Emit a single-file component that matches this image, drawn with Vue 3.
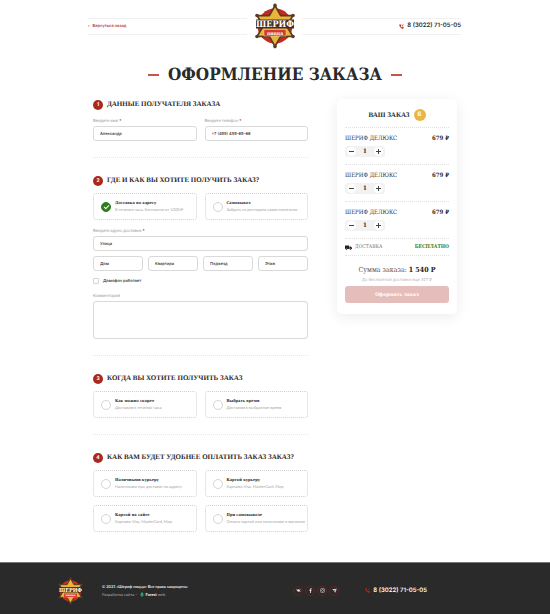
<script setup>
import { ref } from 'vue'

const name = ref('Александр')
const phone = ref('+7 (495) 459-69-66')
const delivery = ref('address')
const time = ref('')
const payment = ref('')
const intercom = ref(false)
const comment = ref('')

const deliveryOptions = [
  { id: 'address', title: 'Доставка по адресу', note: 'В течении часа, бесплатно от 1000 ₽' },
  { id: 'pickup', title: 'Самовывоз', note: 'Забрать из ресторана самостоятельно' },
]
const timeOptions = [
  { id: 'soon', title: 'Как можно скорее', note: 'Доставим в течении часа' },
  { id: 'later', title: 'Выбрать время', note: 'Доставим в выбранное время' },
]
const paymentOptions = [
  { id: 'cash', title: 'Наличными курьеру', note: 'Наличными при доставке по адресу' },
  { id: 'card', title: 'Картой курьеру', note: 'Картами Visa, MasterCard, Мир' },
  { id: 'online', title: 'Картой на сайте', note: 'Картами Visa, MasterCard, Мир' },
  { id: 'onpickup', title: 'При самовывозе', note: 'Оплата картой или наличными в магазине' },
]
const addressParts = ['Дом', 'Квартира', 'Подъезд', 'Этаж']
const items = ref([
  { title: 'ШЕРИФ ДЕЛЮКС', price: '679 ₽', count: 1 },
  { title: 'ШЕРИФ ДЕЛЮКС', price: '679 ₽', count: 1 },
  { title: 'ШЕРИФ ДЕЛЮКС', price: '679 ₽', count: 1 },
])
</script>

<template>
  <div class="page">
    <header class="header">
      <div class="side">
        <a href="#" class="back"><span class="chevron">‹</span>Вернуться назад</a>
      </div>
      <a href="#" class="logo" aria-label="Шериф пицца">
        <svg width="44" height="46" viewBox="0 0 44 46">
          <symbol id="badge" viewBox="0 0 44 46">
            <circle cx="22" cy="23" r="17.5" fill="#c32a20" />
            <path d="M22 2.5 27.6 12.6 40 12.5 33.6 23 40 33.5 27.6 33.4 22 43.5 16.4 33.4 4 33.5 10.4 23 4 12.5 16.4 12.6Z" fill="#e9b43a" stroke="#5b3a20" stroke-width="1.6" stroke-linejoin="round" />
            <g fill="#5b3a20">
              <circle cx="22" cy="2.4" r="1.8" /><circle cx="22" cy="43.6" r="1.8" />
              <circle cx="4" cy="12.5" r="1.8" /><circle cx="40" cy="12.5" r="1.8" />
              <circle cx="4" cy="33.5" r="1.8" /><circle cx="40" cy="33.5" r="1.8" />
            </g>
            <path d="M3 16.5h38v9H3z" fill="#4a2d1e" />
            <rect x="11" y="26.5" width="22" height="6.5" fill="#d23a2c" stroke="#f0d9a0" stroke-width=".5" />
            <text x="22" y="24.2" text-anchor="middle" font-family="DejaVu Serif Condensed, DejaVu Serif, serif" font-weight="700" font-size="9" fill="#fff">ШЕРИФ</text>
            <text x="22" y="31.8" text-anchor="middle" font-family="DejaVu Serif Condensed, DejaVu Serif, serif" font-weight="700" font-size="5" fill="#fff">пицца</text>
          </symbol>
          <use href="#badge" />
        </svg>
      </a>
      <div class="side right">
        <a href="tel:83022710505" class="phone">
          <svg width="5" height="5" viewBox="0 0 10 10"><path d="M1 1.2 3 .4 4.3 3 3.2 4.1Q4 5.9 5.9 6.8L7 5.7 9.6 7 8.8 9Q7.8 10 5.6 8.9 2.2 7.2 1 4.2.3 2.2 1 1.2Z" fill="#b52c22" /><path d="M6 3.8V1M6 3.8h3M6.2 3.6 9.3.6" stroke="#b52c22" stroke-width="1" fill="none" /></svg>
          8 (3022) 71-05-05
        </a>
      </div>
    </header>

    <h1 class="title">ОФОРМЛЕНИЕ ЗАКАЗА</h1>

    <main class="main">
      <form class="form" @submit.prevent>
        <section class="section">
          <h2><span class="num">1</span>ДАННЫЕ ПОЛУЧАТЕЛЯ ЗАКАЗА</h2>
          <div class="two contacts">
            <div class="field">
              <label for="name">Введите имя <b>*</b></label>
              <input id="name" v-model="name" type="text" class="box" />
            </div>
            <div class="field">
              <label for="phone">Введите телефон <b>*</b></label>
              <input id="phone" v-model="phone" type="tel" class="box" />
            </div>
          </div>
        </section>

        <section class="section">
          <h2><span class="num">2</span>ГДЕ И КАК ВЫ ХОТИТЕ ПОЛУЧИТЬ ЗАКАЗ?</h2>
          <div class="two">
            <label v-for="o in deliveryOptions" :key="o.id" class="option">
              <input v-model="delivery" type="radio" name="delivery" :value="o.id" />
              <span class="text"><strong>{{ o.title }}</strong><small>{{ o.note }}</small></span>
            </label>
          </div>
          <div class="field street">
            <label for="street">Введите адрес доставки <b>*</b></label>
            <input id="street" type="text" class="box" placeholder="Улица" />
          </div>
          <div class="four">
            <input v-for="p in addressParts" :key="p" type="text" class="box" :placeholder="p" :aria-label="p" />
          </div>
          <label class="check"><input v-model="intercom" type="checkbox" />Домофон работает</label>
          <div class="field comment">
            <label for="comment">Комментарий</label>
            <textarea id="comment" v-model="comment" class="box area"></textarea>
          </div>
        </section>

        <section class="section">
          <h2><span class="num">3</span>КОГДА ВЫ ХОТИТЕ ПОЛУЧИТЬ ЗАКАЗ</h2>
          <div class="two">
            <label v-for="o in timeOptions" :key="o.id" class="option">
              <input v-model="time" type="radio" name="time" :value="o.id" />
              <span class="text"><strong>{{ o.title }}</strong><small>{{ o.note }}</small></span>
            </label>
          </div>
        </section>

        <section class="section">
          <h2><span class="num">4</span>КАК ВАМ БУДЕТ УДОБНЕЕ ОПЛАТИТЬ ЗАКАЗ ЗАКАЗ?</h2>
          <div class="two">
            <label v-for="o in paymentOptions" :key="o.id" class="option">
              <input v-model="payment" type="radio" name="payment" :value="o.id" />
              <span class="text"><strong>{{ o.title }}</strong><small>{{ o.note }}</small></span>
            </label>
          </div>
        </section>
      </form>

      <aside class="cart">
        <h2 class="cart-title">ВАШ ЗАКАЗ <span>6</span></h2>
        <div v-for="(item, i) in items" :key="i" class="item">
          <div class="row"><span>{{ item.title }}</span><strong>{{ item.price }}</strong></div>
          <div class="stepper">
            <button type="button" aria-label="Убавить" @click="item.count > 1 && item.count--"><svg width="5" height="5" viewBox="0 0 5 5"><path d="M0 2.5h5" /></svg></button>
            <span>{{ item.count }}</span>
            <button type="button" aria-label="Добавить" @click="item.count++"><svg width="5" height="5" viewBox="0 0 5 5"><path d="M0 2.5h5M2.5 0v5" /></svg></button>
          </div>
        </div>
        <div class="shipping">
          <svg width="7" height="5" viewBox="0 0 14 10"><path d="M0 1h8v7H0zM8.6 3h3L14 5.5V8H8.6z" fill="#222" /><circle cx="3" cy="8.3" r="1.5" fill="#222" stroke="#fff" stroke-width=".5" /><circle cx="11" cy="8.3" r="1.5" fill="#222" stroke="#fff" stroke-width=".5" /></svg>
          <span>ДОСТАВКА</span>
          <strong>БЕСПЛАТНО</strong>
        </div>
        <p class="sum">Сумма заказа: <strong>1 540 Р</strong></p>
        <p class="left">До бесплатной доставки еще 327 ₽</p>
        <button type="button" class="submit">Оформить заказ</button>
      </aside>
    </main>

    <footer class="footer">
      <a href="#" class="foot-logo" aria-label="Шериф пицца"><svg width="27" height="28" viewBox="0 0 44 46"><use href="#badge" /></svg></a>
      <div class="legal">
        <p class="copy">© 2021 «Шериф пицца» Все права защищены</p>
        <p class="dev">Разработка сайта – <svg width="4" height="5" viewBox="0 0 8 10"><path d="M4 0 7 3.5H6L8 7H5v3H3V7H0l2-3.5H1z" fill="#2aa37c" /></svg> <a href="#"><b>Forest</b> web</a></p>
      </div>
      <nav class="social">
        <a href="#" aria-label="ВКонтакте"><svg viewBox="0 0 10 10"><path d="M.5 2.5H2.5L4 5V2.5h2V4.5L7.7 2.5h1.8L7.5 5l2 2.5H7.5L6 6v1.5H4.5Q2 7 .5 2.5Z" /></svg></a>
        <a href="#" aria-label="Facebook"><svg viewBox="0 0 10 10"><path d="M4 10V5.5H2.7V3.7H4V2.5Q4 .3 6 .3H7.3V2H6.5Q5.8 2 5.8 2.7v1H7.3L7 5.5H5.8V10Z" /></svg></a>
        <a href="#" aria-label="Instagram"><svg viewBox="0 0 10 10"><g fill="none" stroke="#ddd"><rect x="1" y="1" width="8" height="8" rx="2" /><circle cx="5" cy="5" r="2" /></g><circle cx="7.3" cy="2.7" r=".6" /></svg></a>
        <a href="#" aria-label="Telegram"><svg viewBox="0 0 10 10"><path d="M.5 2.5 9.5 1.5 6.5 9.5 4.5 7 7.5 3 3.3 5.5Z" /></svg></a>
      </nav>
      <a href="tel:83022710505" class="phone">
        <svg width="5" height="5" viewBox="0 0 10 10"><path d="M1 1.2 3 .4 4.3 3 3.2 4.1Q4 5.9 5.9 6.8L7 5.7 9.6 7 8.8 9Q7.8 10 5.6 8.9 2.2 7.2 1 4.2.3 2.2 1 1.2Z" fill="#b52c22" /><path d="M6 1.2Q8.7 1.3 8.8 4M6 2.8Q7.2 2.8 7.2 4" stroke="#b52c22" stroke-width=".8" fill="none" /></svg>
        8 (3022) 71-05-05
      </a>
    </footer>
  </div>
</template>

<style>
body {
  margin: 0;
  background: #fff;
}
</style>

<style scoped>
.page {
  --slab: "DejaVu Serif Condensed", "DejaVu Serif", serif;
  --sans: Inter, Roboto, sans-serif;
  --narrow: Lato, Roboto, sans-serif;
  font-family: var(--sans);
  font-size: 4px;
  line-height: 6px;
  color: #2a2a2a;
  text-rendering: geometricPrecision;
}
.page * {
  box-sizing: border-box;
}
h1, h2, p {
  margin: 0;
}
a {
  color: inherit;
  text-decoration: none;
}
input, textarea, button {
  font: inherit;
  color: inherit;
  margin: 0;
  text-rendering: inherit;
}
.header {
  display: grid;
  grid-template-columns: 1fr 55px 1fr;
  align-items: center;
  padding: 3px 89px 0 88px;
}
.side {
  display: flex;
  align-items: center;
  height: 17px;
  border-top: 1px solid #f1f1f1;
  border-bottom: 1px solid #f1f1f1;
}
.right {
  justify-content: flex-end;
}
.back {
  font-weight: 500;
  color: #a9281e;
}
.chevron {
  margin-right: 3px;
}
.logo {
  display: flex;
  justify-content: center;
}
.phone {
  display: flex;
  align-items: center;
  gap: 3px;
  font-size: 6px;
  font-weight: 600;
}
.title {
  display: flex;
  justify-content: center;
  align-items: center;
  gap: 9px;
  padding: 13px 0 11px;
  font-family: var(--slab);
  font-size: 17px;
  line-height: 26px;
  font-weight: 700;
}
.title::before, .title::after {
  content: "";
  width: 11px;
  height: 2px;
  background: #c8544a;
}
.main {
  display: grid;
  grid-template-columns: minmax(0, 1fr) 120px;
  align-items: start;
  gap: 29px;
  padding: 0 93px 30px;
}
.section + .section {
  margin-top: 16px;
  padding-top: 17px;
  border-top: 1px dotted #e8e8e8;
}
.section h2 {
  display: flex;
  align-items: center;
  gap: 4px;
  font-family: "Liberation Serif", serif;
  font-size: 7px;
  line-height: 11px;
  font-weight: 700;
  white-space: nowrap;
}
.num {
  width: 10px;
  height: 10px;
  border-radius: 50%;
  background: #ab281e;
  color: #fff;
  font-family: var(--sans);
  font-size: 5px;
  line-height: 10px;
  text-align: center;
}
.two {
  display: grid;
  grid-template-columns: repeat(2, minmax(0, 1fr));
  gap: 8px;
  margin-top: 7px;
}
.contacts {
  margin-top: 8px;
}
.four {
  display: grid;
  grid-template-columns: repeat(4, minmax(0, 1fr));
  gap: 5px;
  margin-top: 5px;
}
.field {
  display: flex;
  flex-direction: column;
  gap: 2px;
}
.field label {
  color: #9b9b9b;
}
.field b {
  color: #ab281e;
}
.street {
  margin-top: 8px;
}
.comment {
  margin-top: 9px;
}
.box {
  width: 100%;
  min-width: 0;
  height: 15px;
  padding: 0 6px;
  border: 1px solid #d9d9d9;
  border-radius: 3px;
  background: #fff;
  font-weight: 500;
  outline: 0;
}
.box::placeholder {
  color: #2a2a2a;
}
.area {
  display: block;
  height: 38px;
  padding: 4px 6px;
  resize: none;
}
.option {
  display: flex;
  align-items: center;
  gap: 4px;
  height: 27px;
  padding: 0 7px;
  border: 1px dotted #d0d0d0;
  border-radius: 3px;
}
.option input {
  display: grid;
  place-items: center;
  flex: none;
  appearance: none;
  width: 10px;
  height: 10px;
  border: 1px solid #d5d5d5;
  border-radius: 50%;
}
.option input:checked {
  border-color: #2f7d1f;
  background: #2f7d1f;
}
.option input:checked::after {
  content: "";
  width: 4px;
  height: 2px;
  border-left: 1px solid #fff;
  border-bottom: 1px solid #fff;
  rotate: -45deg;
}
.text {
  display: flex;
  flex-direction: column;
  gap: 1px;
  white-space: nowrap;
}
.text strong {
  font-family: var(--slab);
}
.text small {
  font-family: var(--narrow);
  font-size: 4px;
  color: #a5a5a5;
}
.check {
  display: flex;
  align-items: center;
  gap: 4px;
  margin-top: 6px;
  height: 7px;
  font-weight: 500;
}
.check input {
  appearance: none;
  width: 6px;
  height: 6px;
  border: 1px solid #d5d5d5;
  border-radius: 1px;
}
.check input:checked {
  background: #2f7d1f;
}
.cart {
  padding: 10px 8px 11px;
  border-radius: 5px;
  background: #fff;
  box-shadow: 0 3px 14px rgba(0, 0, 0, 0.08);
  font-family: var(--slab);
}
.cart-title {
  display: flex;
  justify-content: center;
  align-items: center;
  gap: 4px;
  padding-bottom: 6px;
  border-bottom: 1px dotted #e0e0e0;
  font-family: "Liberation Serif", serif;
  font-size: 7px;
  line-height: 12px;
}
.cart-title span {
  width: 12px;
  border-radius: 50%;
  background: #e9b644;
  color: #fff;
  font-family: var(--sans);
  font-size: 6px;
  text-align: center;
}
.item {
  padding: 7px 0;
  border-bottom: 1px dotted #e0e0e0;
}
.row {
  display: flex;
  justify-content: space-between;
  margin-bottom: 4px;
  font-size: 6px;
  line-height: 7px;
}
.stepper {
  display: flex;
  align-items: center;
  justify-content: space-between;
  width: 40px;
  height: 11px;
  padding: 0 2px;
  border-radius: 3px;
  background: #f2f2f2;
  font-size: 6px;
  font-weight: 700;
}
.stepper button {
  display: grid;
  place-items: center;
  width: 9px;
  height: 9px;
  padding: 0;
  border: 0;
  border-radius: 50%;
  background: #fff;
}
.stepper path {
  stroke: #444;
  fill: none;
}
.shipping {
  display: flex;
  align-items: center;
  gap: 3px;
  height: 17px;
  border-bottom: 1px dotted #e0e0e0;
  font-size: 5px;
  color: #777;
}
.shipping strong {
  margin-left: auto;
  color: #2f7d1f;
}
.sum {
  margin-top: 8px;
  font-size: 7px;
  line-height: 11px;
  text-align: center;
  white-space: nowrap;
  color: #555;
}
.sum strong {
  color: #222;
}
.left {
  padding: 1px 0 4px;
  font-family: var(--sans);
  line-height: 5px;
  text-align: center;
  color: #b5b5b5;
}
.submit {
  display: block;
  width: 100%;
  height: 17px;
  padding: 0;
  border: 0;
  border-radius: 3px;
  background: #e5bebb;
  color: #fff;
  font-size: 5px;
  font-weight: 700;
}
.footer {
  display: flex;
  align-items: center;
  height: 52px;
  padding: 4px 123px 0 57px;
  border-top: 1px solid #777;
  background: #2a2a2a;
  color: #fff;
}
.foot-logo {
  display: flex;
  margin-right: 18px;
}
.legal {
  flex: 1;
  font-family: var(--narrow);
}
.copy {
  font-weight: 700;
  color: #e5e5e5;
}
.dev {
  margin-top: 2px;
  color: #aaa;
}
.dev svg {
  vertical-align: middle;
  margin: 0 1px;
}
.dev b {
  color: #fff;
}
.social {
  display: flex;
  gap: 2px;
  margin-right: 26px;
}
.social a {
  display: grid;
  place-items: center;
  width: 10px;
  height: 10px;
  border: 1px solid #65231f;
  border-radius: 50%;
}
.social svg {
  width: 5px;
  height: 5px;
  fill: #ddd;
}
</style>
